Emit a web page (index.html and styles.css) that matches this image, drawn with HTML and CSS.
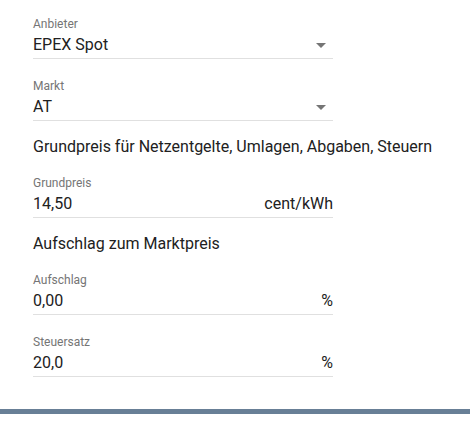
FILE: index.html
```html
<!DOCTYPE html>
<html lang="de">
<head>
  <meta charset="UTF-8">
  <title>Tarif</title>
  <link rel="stylesheet" href="styles.css">
</head>
<body>

  <div class="form">
    <div class="field">
      <label class="field-label">Anbieter</label>
      <div class="field-row">
        <span class="field-value">EPEX Spot</span>
        <span class="arrow"></span>
      </div>
    </div>

    <div class="field">
      <label class="field-label">Markt</label>
      <div class="field-row">
        <span class="field-value">AT</span>
        <span class="arrow"></span>
      </div>
    </div>

    <h3 class="section">Grundpreis für Netzentgelte, Umlagen, Abgaben, Steuern</h3>

    <div class="field">
      <label class="field-label">Grundpreis</label>
      <div class="field-row">
        <span class="field-value">14,50</span>
        <span class="suffix">cent/kWh</span>
      </div>
    </div>

    <h3 class="section">Aufschlag zum Marktpreis</h3>

    <div class="field">
      <label class="field-label">Aufschlag</label>
      <div class="field-row">
        <span class="field-value">0,00</span>
        <span class="suffix">%</span>
      </div>
    </div>

    <div class="field">
      <label class="field-label">Steuersatz</label>
      <div class="field-row">
        <span class="field-value">20,0</span>
        <span class="suffix">%</span>
      </div>
    </div>
  </div>

  <div class="bottom-bar"></div>

</body>
</html>
```

FILE: styles.css
```css
body {
  margin: 0;
  font-family: Roboto, 'Noto Sans', sans-serif;
  background: #fff;
  color: #212121;
}

.form {
  padding: 17px 0 0 33px;
  width: 300px;
}

.field {
  display: block;
  padding-bottom: 3px;
  border-bottom: 1px solid #e0e0e0;
}

.field + .field {
  margin-top: 20px;
}

.field-label {
  display: block;
  font-size: 12px;
  line-height: 14px;
  color: #757575;
  margin-bottom: 4px;
}

.field-row {
  display: flex;
  align-items: center;
  justify-content: space-between;
  height: 20px;
}

.field-value {
  font-size: 16px;
  line-height: 20px;
}

.suffix {
  font-size: 16px;
  line-height: 20px;
}

.arrow {
  width: 0;
  height: 0;
  margin-right: 7px;
  border-left: 5px solid transparent;
  border-right: 5px solid transparent;
  border-top: 5px solid #757575;
}

.section {
  margin: 16px 0 20px;
  font-size: 16px;
  line-height: 19px;
  font-weight: 400;
  white-space: nowrap;
}

.bottom-bar {
  margin-top: 32px;
  height: 5px;
  background: #687f96;
}
```
